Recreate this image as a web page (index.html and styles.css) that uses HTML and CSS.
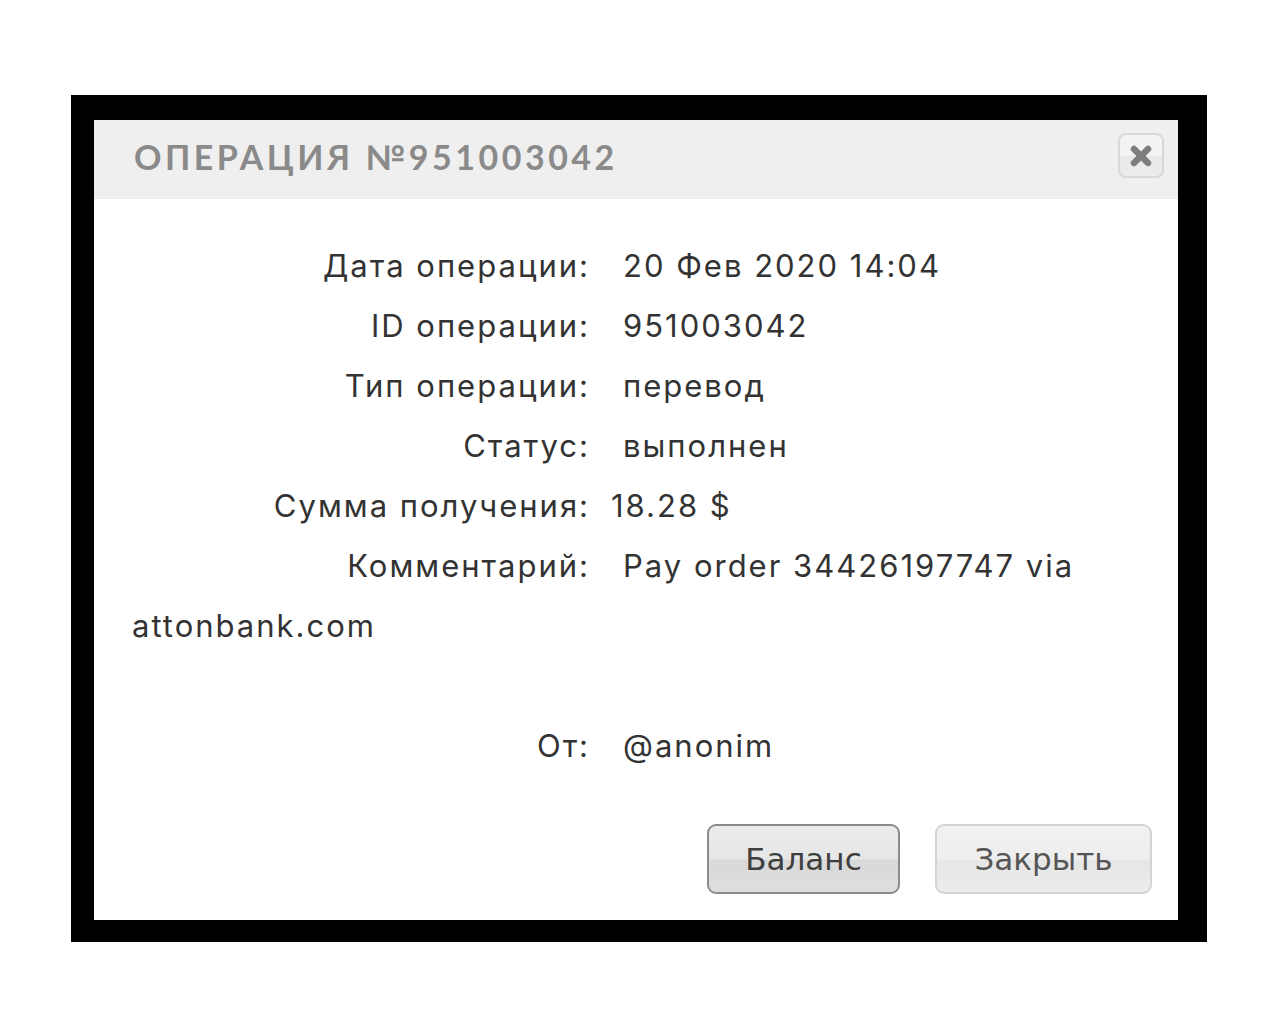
FILE: index.html
```html
<!DOCTYPE html>
<html lang="ru">
<head>
<meta charset="utf-8">
<title>Операция №951003042</title>
<link rel="stylesheet" href="styles.css">
</head>
<body>
<div class="frame">
  <div class="dialog">
    <div class="header">
      <h1 class="title">ОПЕРАЦИЯ №951003042</h1>
      <button class="close" type="button" aria-label="Закрыть">
        <svg class="close-icon" viewBox="0 0 24 24" width="24" height="24"><path d="M5 5 L19 19 M19 5 L5 19" stroke="#7d7d7d" stroke-width="6.5" stroke-linecap="round" fill="none"/></svg>
      </button>
    </div>
    <div class="content">
      <div class="row"><span class="label">Дата операции:</span><span class="value">20 Фев 2020 14:04</span></div>
      <div class="row"><span class="label">ID операции:</span><span class="value">951003042</span></div>
      <div class="row"><span class="label">Тип операции:</span><span class="value">перевод</span></div>
      <div class="row"><span class="label">Статус:</span><span class="value">выполнен</span></div>
      <div class="row"><span class="label">Сумма получения:</span><span class="value value-tight">18.28 $</span></div>
      <div class="row"><span class="label">Комментарий:</span><span class="value">Pay order 34426197747 via</span></div>
      <div class="row row-cont">attonbank.com</div>
      <div class="row row-empty"></div>
      <div class="row"><span class="label">От:</span><span class="value">@anonim</span></div>
    </div>
    <div class="actions">
      <button class="btn btn-primary" type="button">Баланс</button>
      <button class="btn btn-secondary" type="button">Закрыть</button>
    </div>
  </div>
</div>
</body>
</html>
```

FILE: styles.css
```css
* { box-sizing: border-box; }

html, body {
  margin: 0;
  padding: 0;
  background: #ffffff;
}

body {
  padding: 95px 0 0 71px;
  font-family: "Inter", "DejaVu Sans", sans-serif;
}

.frame {
  width: 1136px;
  height: 847px;
  background: #000;
  padding: 25px 29px 22px 23px;
}

.dialog {
  width: 1084px;
  height: 800px;
  background: #fff;
  display: flex;
  flex-direction: column;
}

.header {
  height: 79px;
  background: #efefef;
  display: flex;
  align-items: center;
  justify-content: space-between;
  padding: 0 14px 0 40px;
}

.title {
  margin: -7px 0 0 0;
  font-family: "Lato", "DejaVu Sans", sans-serif;
  font-weight: 700;
  font-size: 34px;
  letter-spacing: 3.5px;
  color: #8a8a8a;
}

.close {
  align-self: flex-start;
  margin-top: 13px;
  width: 46px;
  height: 45px;
  border: 2px solid #d8d8d8;
  border-radius: 8px;
  background: linear-gradient(#f3f3f3 0%, #f3f3f3 50%, #e9e9e9 51%, #ececec 100%);
  display: flex;
  align-items: center;
  justify-content: center;
  padding: 0;
}

.close-icon { display: block; }

.content {
  padding: 37px 38px 0 38px;
  color: #333333;
  font-size: 31px;
  letter-spacing: 2px;
  line-height: 60px;
}

.row { min-height: 60px; }

.label {
  display: inline-block;
  width: 458px;
  text-align: right;
}

.value { margin-left: 33px; }
.value-tight { margin-left: 21px; }

.actions {
  margin-top: auto;
  display: flex;
  justify-content: flex-end;
  gap: 35px;
  padding: 0 26px 26px 0;
}

.btn {
  height: 70px;
  border-radius: 9px;
  font-family: "DejaVu Sans", sans-serif;
  font-size: 31px;
  padding: 0;
}

.btn-primary {
  width: 193px;
  border: 2px solid #8c8c8c;
  color: #3e3e3e;
  background: linear-gradient(#ececec 0%, #e6e6e6 50%, #d9d9d9 52%, #dedede 100%);
}

.btn-secondary {
  width: 217px;
  border: 2px solid #d4d4d4;
  color: #555;
  background: linear-gradient(#f1f1f1 0%, #eeeeee 50%, #e6e6e6 52%, #ececec 100%);
}
```
